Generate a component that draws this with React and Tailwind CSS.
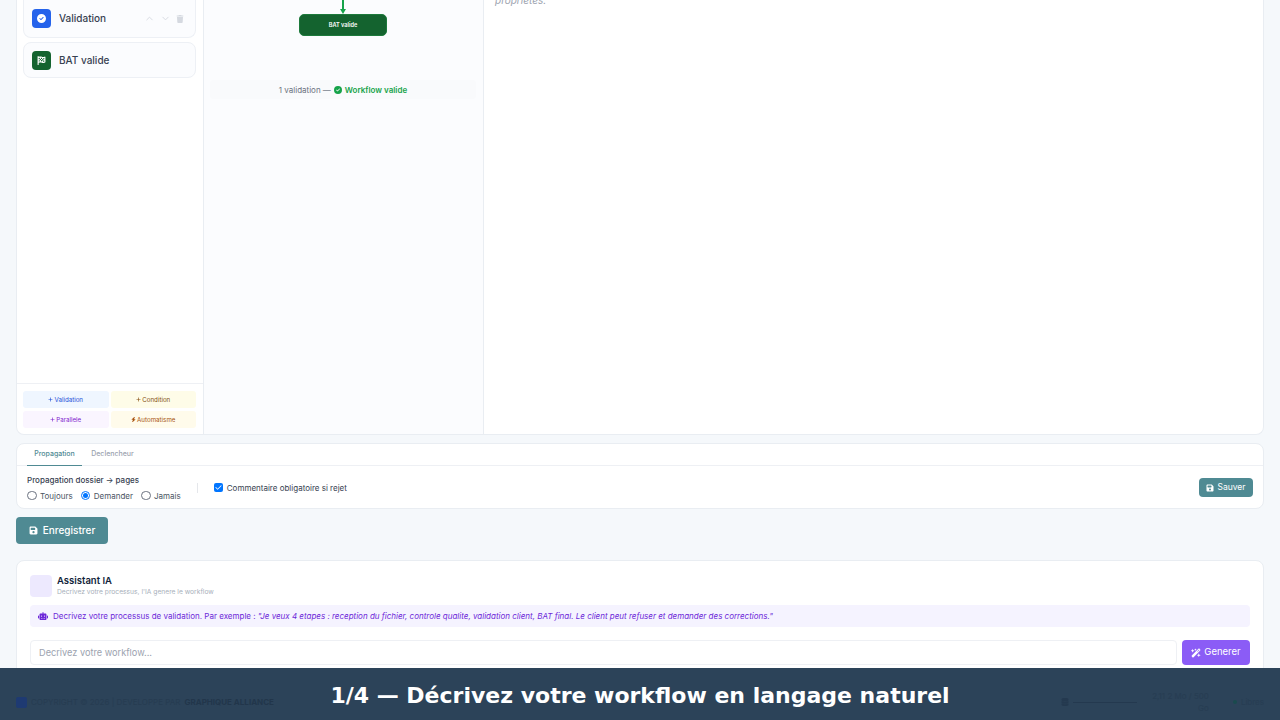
import { ChevronUp, ChevronDown } from 'lucide-react';
import { FaCircleCheck, FaFlagCheckered, FaRobot, FaFloppyDisk, FaWandMagicSparkles, FaTrash, FaPlus, FaBolt, FaCheck, FaDatabase } from 'react-icons/fa6';

const font = { fontFamily: 'Inter, sans-serif' };

function StepRow({ label, bg, icon, actions, className }) {
    return (
        <div className={`flex items-center gap-2 border border-[#edf0f5] bg-[#fbfcfe] rounded-lg pl-2 pr-[11px] ${className}`}>
            <div className={`w-[19px] h-[19px] rounded-[4px] flex items-center justify-center ${bg}`}>{icon}</div>
            <span className="text-[10px] font-medium text-[#374151] flex-1">{label}</span>
            {actions && (
                <div className="flex items-center gap-[5px] text-[#d5d9e0]">
                    <ChevronUp size={11} />
                    <ChevronDown size={11} />
                    <FaTrash size={8} />
                </div>
            )}
        </div>
    );
}

function AddButton({ label, cls, icon }) {
    return (
        <button className={`h-[17px] rounded-[3px] flex items-center justify-center gap-[1px] text-[6.2px] ${cls}`}>
            {icon}
            {label}
        </button>
    );
}

export default function App() {
    return (
        <div className="relative w-[1280px] h-[720px] overflow-hidden bg-[#f5f8fb]" style={font}>
            <div className="px-4 flex flex-col">
                {/* editor */}
                <div className="h-[435px] bg-white border-x border-b border-[#e9edf2] rounded-b-lg flex">
                    <div className="w-[187px] border-r border-[#e9edf2] flex flex-col">
                        <div className="flex-1 pl-[6px] pr-[7px] flex flex-col gap-[4px]">
                            <StepRow
                                label="Validation"
                                bg="bg-[#2563eb]"
                                actions
                                className="h-[38px] border-t-0 rounded-t-none"
                                icon={<FaCircleCheck size={9} className="text-white" />}
                            />
                            <StepRow
                                label="BAT valide"
                                bg="bg-[#14632f]"
                                className="h-[36px]"
                                icon={<FaFlagCheckered size={9} className="text-white" />}
                            />
                        </div>
                        <div className="border-t border-[#eef0f4] h-[51px] pl-[6px] pr-[7px] pt-[7px] grid grid-cols-2 gap-x-[2px] gap-y-[3px] content-start">
                            <AddButton label="Validation" cls="bg-[#eff6ff] text-[#1d4ed8]" icon={<FaPlus size={5} />} />
                            <AddButton label="Condition" cls="bg-[#fefce8] text-[#854d0e]" icon={<FaPlus size={5} />} />
                            <AddButton label="Parallele" cls="bg-[#faf5ff] text-[#7e22ce]" icon={<FaPlus size={5} />} />
                            <AddButton label="Automatisme" cls="bg-[#fffbeb] text-[#a8530f]" icon={<FaBolt size={5} />} />
                        </div>
                    </div>
                    <div className="w-[280px] bg-[#fbfcfe] border-r border-[#e9edf2] flex flex-col items-center pr-[1px]">
                        <div className="w-[1.5px] h-[9px] bg-[#16a34a]" />
                        <div className="w-0 h-0 border-x-[3.5px] border-x-transparent border-t-[5px] border-t-[#16a34a]" />
                        <div className="w-[88px] h-[22px] rounded-[5px] bg-[#14632f] border border-[#1d7a3c] text-white text-[5.6px] font-semibold flex items-center justify-center">
                            BAT valide
                        </div>
                        <div className="mt-[44px] w-[266px] h-[19px] rounded-[3px] bg-[#f9fafc] flex items-center justify-center gap-[3px] text-[8px] text-[#6b7280]">
                            1 validation —
                            <FaCircleCheck size={8} className="text-[#16a34a]" />
                            <span className="text-[#16a34a] font-semibold">Workflow valide</span>
                        </div>
                    </div>
                    <div className="flex-1 pl-[11px] -mt-[7px] text-[10px] italic text-[#9ca3af]">propriétés.</div>
                </div>

                {/* options */}
                <div className="mt-[8px] h-[66px] bg-white border border-[#e9edf2] rounded-lg">
                    <div className="h-[22px] px-[10px] border-b border-[#eef0f4] flex text-[7px] font-medium">
                        <div className="w-[55px] h-[22px] border-b border-[#4f8a93] text-[#4f8a93] flex items-center justify-center">Propagation</div>
                        <div className="w-[55px] ml-[3px] text-[#9ca3af] flex items-center justify-center">Declencheur</div>
                    </div>
                    <div className="px-[10px] h-[43px] flex items-center">
                        <div className="flex flex-col gap-[4px]">
                            <div className="text-[8px] font-medium text-[#374151]">Propagation dossier → pages</div>
                            <div className="flex items-center gap-[8px] text-[8px] text-[#4b5563]">
                                <label className="flex items-center gap-[3.5px]"><span className="w-[9.5px] h-[9.5px] rounded-full border border-[#6b7280]" />Toujours</label>
                                <label className="flex items-center gap-[3.5px]"><span className="w-[9.5px] h-[9.5px] rounded-full border border-[#0075ff] flex items-center justify-center"><span className="w-[5px] h-[5px] rounded-full bg-[#0075ff]" /></span>Demander</label>
                                <label className="flex items-center gap-[3.5px]"><span className="w-[9.5px] h-[9.5px] rounded-full border border-[#6b7280]" />Jamais</label>
                            </div>
                        </div>
                        <div className="w-px h-[10px] bg-[#e5e7eb] mx-[16px]" />
                        <div className="flex items-center gap-[4px] text-[8px] text-[#374151]">
                            <span className="w-[9px] h-[9px] rounded-[2px] bg-[#0075ff] flex items-center justify-center"><FaCheck size={7} className="text-white" /></span>
                            Commentaire obligatoire si rejet
                        </div>
                        <button className="ml-auto w-[54px] h-[19px] rounded-[4px] bg-[#4f8a93] text-white text-[8.5px] flex items-center justify-center gap-[3px]">
                            <FaFloppyDisk size={8} />
                            Sauver
                        </button>
                    </div>
                </div>

                <button className="mt-[8px] w-[92px] h-[27px] rounded-[4px] bg-[#4f8a93] text-white text-[10px] font-medium flex items-center justify-center gap-[5px]">
                    <FaFloppyDisk size={9} />
                    Enregistrer
                </button>

                {/* assistant */}
                <div className="mt-[16px] bg-white border border-[#e9edf2] rounded-lg px-[13px] pt-[14px] h-[140px]">
                    <div className="flex items-center gap-[5px]">
                        <div className="w-[22px] h-[22px] rounded-[4px] bg-[#ede9fe]" />
                        <div>
                            <div className="text-[9.5px] leading-[12px] font-semibold text-[#111f3a]">Assistant IA</div>
                            <div className="text-[6.7px] leading-[10px] text-[#a8afba]">Decrivez votre processus, l'IA genere le workflow</div>
                        </div>
                    </div>
                    <div className="mt-[8px] h-[22px] bg-[#f5f3ff] rounded-[4px] px-[8px] flex items-center gap-[5px] text-[8px] text-[#6d28d9]">
                        <FaRobot size={10} />
                        <span>Decrivez votre processus de validation. Par exemple : <em>"Je veux 4 etapes : reception du fichier, controle qualite, validation client, BAT final. Le client peut refuser et demander des corrections."</em></span>
                    </div>
                    <div className="mt-[13px] flex gap-[5px]">
                        <div className="flex-1 h-[25px] border border-[#eef0f4] rounded-[4px] px-2 flex items-center text-[9.2px] text-[#9ca3af]">Decrivez votre workflow...</div>
                        <button className="w-[68px] h-[25px] rounded-[4px] bg-[#8b5cf6] text-white text-[9.5px] flex items-center justify-center gap-[3px]">
                            <FaWandMagicSparkles size={10} />
                            Generer
                        </button>
                    </div>
                </div>
            </div>

            {/* caption over the page */}
            <div className="absolute left-0 right-0 bottom-0 h-[52px] bg-[#2c4359] flex items-center justify-center pt-[2px] text-white text-[22px] font-bold" style={{ fontFamily: '"DejaVu Sans", sans-serif' }}>
                1/4 — Décrivez votre workflow en langage naturel
            </div>
            <div className="absolute left-4 right-4 bottom-[6px] flex items-center justify-between text-[8px] text-[#22364b]">
                <div className="flex items-center gap-[4px]">
                    <div className="w-[11px] h-[11px] rounded-[2px] bg-[#1e3a72]" />
                    <span className="opacity-50">COPYRIGHT © 2026 | DEVELOPPE PAR</span>
                    <span className="font-bold">GRAPHIQUE ALLIANCE</span>
                </div>
                <div className="flex items-center gap-[4px] opacity-70">
                    <FaDatabase size={8} />
                    <div className="w-[64px] h-[1px] bg-[#22364b]" />
                    <span className="opacity-60 w-[68px] text-right">2,11 2 Mo / 500 Go</span>
                    <span className="w-[4px] h-[4px] ml-[20px] rounded-full bg-[#134e4a]" />
                    <span className="opacity-60">Libres</span>
                </div>
            </div>
        </div>
    );
}
